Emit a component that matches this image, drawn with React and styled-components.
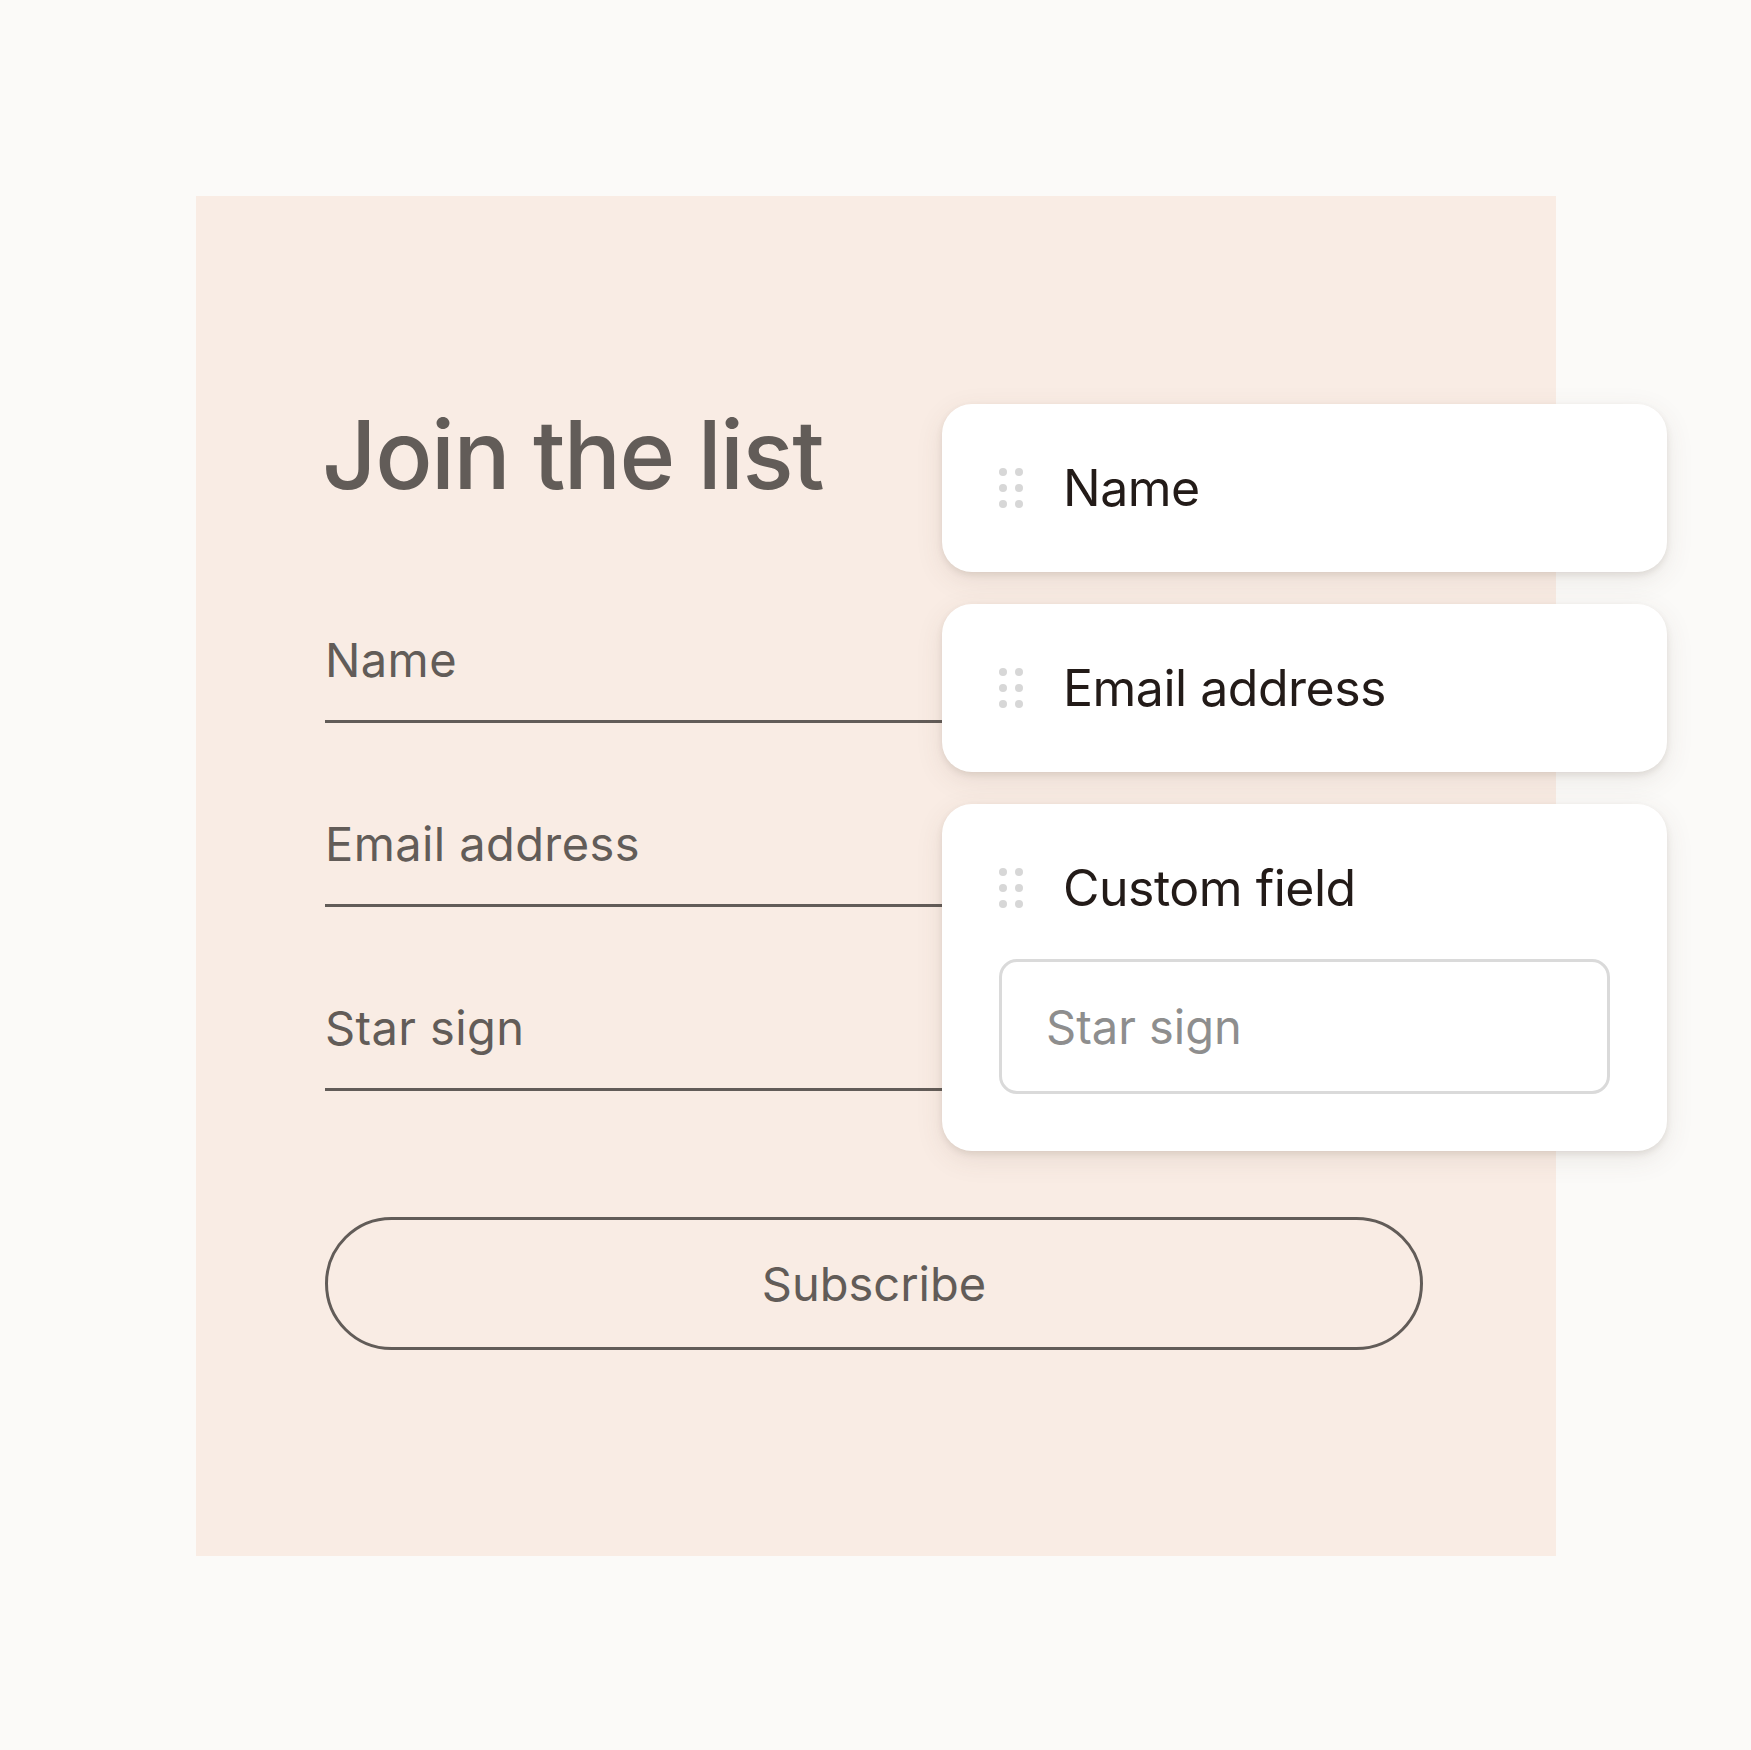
import React from "react";
import styled, { createGlobalStyle } from "styled-components";

const Global = createGlobalStyle`
  html, body { margin: 0; padding: 0; background: #fbfaf8; }
  body { font-family: Inter, "Noto Sans", sans-serif; -webkit-font-smoothing: antialiased; }
  * { box-sizing: border-box; }
`;

const Page = styled.div`
  width: 1751px;
  height: 1750px;
  background: #fbfaf8;
  padding: 196px 0 0 196px;
`;

const Panel = styled.section`
  width: 1360px;
  height: 1360px;
  background: #f9ece4;
  padding: 208px 133px 0 129px;
  display: flex;
  flex-direction: column;
`;

const Top = styled.div`
  display: grid;
  grid-template-columns: 617px 725px;
  margin-right: -244px;
  align-items: start;
`;

const FormCol = styled.div`
  display: flex;
  flex-direction: column;
`;

const Heading = styled.h1`
  margin: 3px 0 0 -3px;
  font-size: 95px;
  line-height: 95px;
  font-weight: 500;
  letter-spacing: -1.5px;
  color: #625c58;
`;

const Fields = styled.div`
  display: flex;
  flex-direction: column;
  gap: 97px;
  margin-top: 134px;
`;

const Field = styled.div`
  padding-bottom: 37px;
  border-bottom: 3px solid #625c58;
`;

const Label = styled.div`
  font-size: 47px;
  line-height: 47px;
  font-weight: 400;
  letter-spacing: 0.4px;
  color: #625c58;
`;

const Cards = styled.div`
  display: flex;
  flex-direction: column;
  gap: 32px;
  position: relative;
  z-index: 1;
`;

const Card = styled.div`
  background: #ffffff;
  border-radius: 30px;
  padding: 57px;
  display: flex;
  flex-direction: column;
  gap: 44px;
  box-shadow: 0 3px 6px rgba(90, 70, 60, 0.12), 0 8px 28px rgba(90, 70, 60, 0.1);
`;

const CardRow = styled.div`
  display: flex;
  align-items: center;
  height: 54px;
  gap: 40px;
`;

const Grip = styled.div`
  display: grid;
  grid-template-columns: repeat(2, 8px);
  grid-auto-rows: 8px;
  gap: 8px;
`;

const Dot = styled.span`
  width: 8px;
  height: 8px;
  border-radius: 50%;
  background: #d7d7d7;
`;

const CardTitle = styled.div`
  font-size: 50px;
  line-height: 54px;
  font-weight: 400;
  letter-spacing: -0.5px;
  color: #231b18;
`;

const InputBox = styled.div`
  height: 135px;
  border: 3px solid #dadada;
  border-radius: 18px;
  padding: 0 44px;
  display: flex;
  align-items: center;
  font-size: 47px;
  color: #8e8e8e;
`;

const Button = styled.button`
  margin-top: 66px;
  height: 133px;
  width: 100%;
  border: 3px solid #625c58;
  border-radius: 67px;
  background: transparent;
  font-family: Inter, "Noto Sans", sans-serif;
  font-size: 47px;
  font-weight: 400;
  color: #625c58;
  display: flex;
  align-items: center;
  justify-content: center;
`;

const GripIcon = () => (
  <Grip>
    {Array.from({ length: 6 }).map((_, i) => (
      <Dot key={i} />
    ))}
  </Grip>
);

export default function App() {
  return (
    <>
      <Global />
      <Page>
        <Panel>
          <Top>
            <FormCol>
              <Heading>Join the list</Heading>
              <Fields>
                {["Name", "Email address", "Star sign"].map((l) => (
                  <Field key={l}>
                    <Label>{l}</Label>
                  </Field>
                ))}
              </Fields>
            </FormCol>
            <Cards>
              <Card>
                <CardRow>
                  <GripIcon />
                  <CardTitle>Name</CardTitle>
                </CardRow>
              </Card>
              <Card>
                <CardRow>
                  <GripIcon />
                  <CardTitle>Email address</CardTitle>
                </CardRow>
              </Card>
              <Card>
                <CardRow>
                  <GripIcon />
                  <CardTitle>Custom field</CardTitle>
                </CardRow>
                <InputBox>Star sign</InputBox>
              </Card>
            </Cards>
          </Top>
          <Button>Subscribe</Button>
        </Panel>
      </Page>
    </>
  );
}
